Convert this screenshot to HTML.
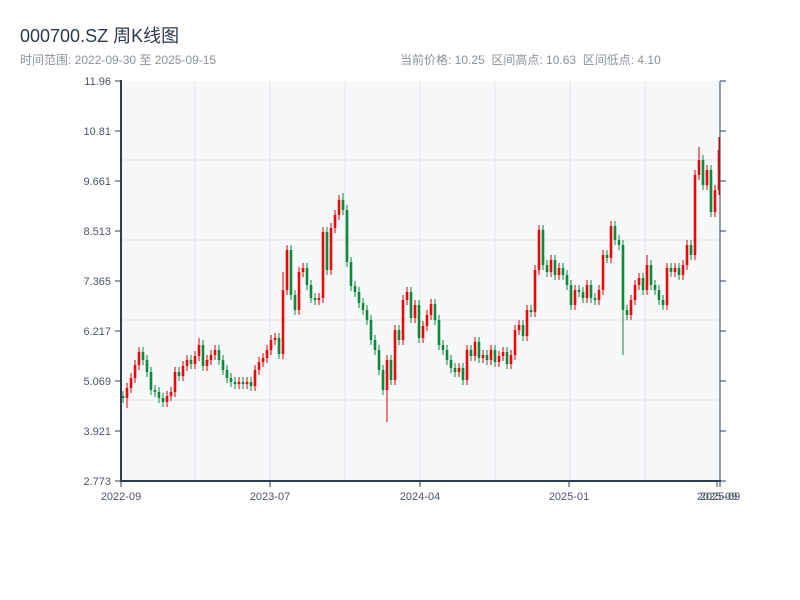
<!DOCTYPE html>
<html><head><meta charset="utf-8"><style>
body{margin:0;background:#fff;width:800px;height:600px;overflow:hidden;font-family:"Liberation Sans","Noto Sans CJK SC",sans-serif}
.t{position:absolute;left:20px;top:22px;font-size:18px;color:#2d3a4a}
.s{position:absolute;top:51px;font-size:12px;color:#8a9199}
</style></head><body>
<div class="t">000700.SZ 周K线图</div>
<div class="s" style="left:20px">时间范围: 2022-09-30 至 2025-09-15</div>
<div class="s" style="left:400px">当前价格: 10.25 &nbsp;区间高点: 10.63 &nbsp;区间低点: 4.10</div>
<svg width="800" height="600" style="position:absolute;left:0;top:0" xmlns="http://www.w3.org/2000/svg" font-family="Liberation Sans, sans-serif" font-size="11" fill="#4a5568">
<rect x="121" y="81" width="599" height="400" fill="#f7f8fa"/>
<g stroke="#e2e4e8" stroke-width="1">
<line x1="121" x2="720" y1="160" y2="160"/><line x1="121" x2="720" y1="240" y2="240"/><line x1="121" x2="720" y1="320" y2="320"/><line x1="121" x2="720" y1="400" y2="400"/>
<line x1="195" x2="195" y1="81" y2="481"/><line x1="270" x2="270" y1="81" y2="481"/><line x1="345" x2="345" y1="81" y2="481"/><line x1="420" x2="420" y1="81" y2="481"/><line x1="495" x2="495" y1="81" y2="481"/><line x1="570" x2="570" y1="81" y2="481"/><line x1="645" x2="645" y1="81" y2="481"/>
</g>
<path fill="none" stroke="#0a8a3a" stroke-width="1" d="M123 391V403M143 347V365M147 355V377M151 367V395M155 385V397M159 387V403M163 393V407M179 367V381M191 355V369M203 340V371M219 345V365M223 355V375M227 365V383M231 373V387M235 377V389M243 377V389M251 377V391M279 333V359M291 245V300M295 290V315M307 263V290M311 280V303M315 293V305M327 227V275M343 193V215M347 205V267M351 257V291M355 281V297M359 287V308M363 298V315M367 305V325M371 315V345M375 335V355M379 345V375M383 365V395M391 355V385M399 325V345M411 287V323M419 300V343M435 299V325M439 315V350M443 340V355M447 345V365M451 355V373M455 363V377M463 363V385M471 345V361M479 337V363M487 350V365M495 345V367M507 347V369M523 320V341M531 305V317M543 225V270M547 260V277M555 255V280M563 263V280M567 270V290M571 280V310M579 285V297M583 287V303M591 280V303M595 293V305M607 250V263M615 221V245M619 235V250M623 240V355M627 305V320M643 273V295M651 260V290M655 280V295M659 285V305M663 295V310M671 263V277M679 263V280M691 240V260M703 155V190M711 165V217"/>
<path fill="none" stroke="#0a8a3a" stroke-width="2.6" d="M123 396V398M143 352V360M147 360V372M151 372V390M155 390V392M159 392V398M163 398V402M179 372V376M191 360V364M203 345V366M219 350V360M223 360V370M227 370V378M231 378V382M235 382V384M243 382V384M251 382V386M279 338V354M291 250V295M295 295V310M307 268V285M311 285V298M315 298V300M327 232V270M343 200V210M347 210V262M351 262V286M355 286V292M359 292V303M363 303V310M367 310V320M371 320V340M375 340V350M379 350V370M383 370V390M391 360V380M399 330V340M411 292V318M419 305V338M435 304V320M439 320V345M443 345V350M447 350V360M451 360V368M455 368V372M463 368V380M471 350V356M479 342V358M487 355V360M495 350V362M507 352V364M523 325V336M531 310V312M543 230V265M547 265V272M555 260V275M563 268V275M567 275V285M571 285V305M579 290V292M583 292V298M591 285V298M595 298V300M607 255V258M615 226V240M619 240V245M623 245V310M627 310V315M643 278V290M651 265V285M655 285V290M659 290V300M663 300V305M671 268V272M679 268V275M691 245V255M703 160V185M711 170V212"/>
<path fill="none" stroke="#d80000" stroke-width="1" d="M127 383V408M131 373V393M135 360V383M139 347V370M167 391V407M171 387V401M175 367V397M183 361V381M187 355V371M195 351V369M199 338V361M207 355V371M211 350V365M215 345V360M239 377V389M247 377V389M255 365V391M259 357V375M263 353V367M267 345V363M271 335V355M275 333V345M283 272V359M287 245V295M299 267V315M303 263V277M319 293V305M323 227V303M331 223V275M335 210V233M339 195V220M387 355V422M395 325V385M403 295V345M407 287V305M415 300V323M423 321V343M427 310V331M431 299V320M459 363V377M467 345V385M475 337V361M483 350V363M491 345V365M499 351V367M503 347V361M511 350V369M515 325V360M519 320V335M527 305V341M535 265V317M539 225V275M551 255V277M559 263V280M575 285V310M587 280V303M599 285V305M603 250V295M611 221V263M631 295V320M635 280V305M639 273V290M647 255V295M667 263V310M675 263V277M683 260V280M687 240V270M695 170V260M699 147V180M707 165V190M715 185V217M719 137V195"/>
<path fill="none" stroke="#e80a0a" stroke-width="2.6" d="M127 388V398M131 378V388M135 365V378M139 352V365M167 396V402M171 392V396M175 372V392M183 366V376M187 360V366M195 356V364M199 345V356M207 360V366M211 355V360M215 350V355M239 382V384M247 382V384M255 370V386M259 362V370M263 358V362M267 350V358M271 340V350M275 338V340M283 290V354M287 250V290M299 272V310M303 268V272M319 298V300M323 232V298M331 228V270M335 215V228M339 200V215M387 360V390M395 330V380M403 300V340M407 292V300M415 305V318M423 326V338M427 315V326M431 304V315M459 368V372M467 350V380M475 342V356M483 355V358M491 350V360M499 356V362M503 352V356M511 355V364M515 330V355M519 325V330M527 310V336M535 270V312M539 230V270M551 260V272M559 268V275M575 290V305M587 285V298M599 290V300M603 255V290M611 226V258M631 300V315M635 285V300M639 278V285M647 265V290M667 268V305M675 268V272M683 265V275M687 245V265M695 175V255M699 160V175M707 170V185M715 190V212M719 150V190"/>
<g stroke="#2d3e50" stroke-width="1">
<line x1="115" x2="121" y1="81" y2="81"/><line x1="115" x2="121" y1="131" y2="131"/><line x1="115" x2="121" y1="181" y2="181"/><line x1="115" x2="121" y1="231" y2="231"/><line x1="115" x2="121" y1="281" y2="281"/><line x1="115" x2="121" y1="331" y2="331"/><line x1="115" x2="121" y1="381" y2="381"/><line x1="115" x2="121" y1="431" y2="431"/><line x1="115" x2="121" y1="481" y2="481"/>
<line x1="720" x2="726" y1="81" y2="81"/><line x1="720" x2="726" y1="131" y2="131"/><line x1="720" x2="726" y1="181" y2="181"/><line x1="720" x2="726" y1="231" y2="231"/><line x1="720" x2="726" y1="281" y2="281"/><line x1="720" x2="726" y1="331" y2="331"/><line x1="720" x2="726" y1="381" y2="381"/><line x1="720" x2="726" y1="431" y2="431"/><line x1="720" x2="726" y1="481" y2="481"/>
<line x1="121" x2="121" y1="481" y2="487"/><line x1="270" x2="270" y1="481" y2="487"/><line x1="420" x2="420" y1="481" y2="487"/><line x1="569" x2="569" y1="481" y2="487"/><line x1="717" x2="717" y1="481" y2="487"/><line x1="720" x2="720" y1="481" y2="487"/>
<line x1="720" x2="720" y1="81" y2="481"/>
</g>
<line x1="121" x2="121" y1="80" y2="482" stroke="#2d3e50" stroke-width="2"/>
<line x1="120" x2="721" y1="481" y2="481" stroke="#2d3e50" stroke-width="2"/>
<g text-anchor="end">
<text x="111" y="85">11.96</text><text x="111" y="135">10.81</text><text x="111" y="185">9.661</text><text x="111" y="235">8.513</text><text x="111" y="285">7.365</text><text x="111" y="335">6.217</text><text x="111" y="385">5.069</text><text x="111" y="435">3.921</text><text x="111" y="485">2.773</text>
</g>
<g text-anchor="middle">
<text x="121" y="500">2022-09</text><text x="270" y="500">2023-07</text><text x="420" y="500">2024-04</text><text x="569" y="500">2025-01</text><text x="717" y="500">2025-09</text><text x="720" y="500">2025-09</text>
</g>
</svg>
</body></html>
